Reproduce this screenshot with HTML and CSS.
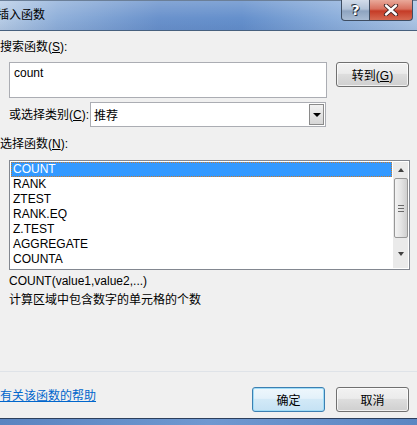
FILE: index.html
```html
<!DOCTYPE html>
<html>
  <head>
    <meta charset="utf-8">
    <title>插入函数</title>
    <link rel="stylesheet" href="styles.css">
  </head>
  <body>
    <div class="dialog">
      <div class="titlebar">
        <span class="title-text">插入函数</span>
        <div class="caption-buttons">
          <button class="caption-help">?</button>
          <button class="caption-close">
            <svg width="16" height="12" viewBox="0 0 16 12">
              <path d="M3 1.5 L13 10.5 M13 1.5 L3 10.5" stroke="#3a2020" stroke-width="4.2" stroke-linecap="round"/>
              <path d="M3 1.5 L13 10.5 M13 1.5 L3 10.5" stroke="#fff" stroke-width="2.4" stroke-linecap="round"/>
            </svg>
          </button>
        </div>
      </div>

      <div class="content">
        <div class="label">搜索函数(<u>S</u>):</div>
        <div class="search-row">
          <div class="search-box">count</div>
          <button class="btn">转到(<u>G</u>)</button>
        </div>

        <div class="category-row">
          <span class="label">或选择类别(<u>C</u>):</span>
          <div class="combo">
            <span class="combo-value">推荐</span>
            <span class="combo-arrow"></span>
          </div>
        </div>

        <div class="label list-label">选择函数(<u>N</u>):</div>
        <div class="listbox">
          <ul class="list-items">
            <li class="selected">COUNT</li>
            <li>RANK</li>
            <li>ZTEST</li>
            <li>RANK.EQ</li>
            <li>Z.TEST</li>
            <li>AGGREGATE</li>
            <li>COUNTA</li>
          </ul>
          <div class="scrollbar">
            <span class="arrow-up"></span>
            <div class="thumb"><span class="grip"></span></div>
            <span class="arrow-down"></span>
          </div>
        </div>

        <div class="description">
          <div>COUNT(value1,value2,...)</div>
          <div>计算区域中包含数字的单元格的个数</div>
        </div>
      </div>

      <div class="footer">
        <a class="help-link" href="#">有关该函数的帮助</a>
        <div class="footer-buttons">
          <button class="btn btn-default">确定</button>
          <button class="btn">取消</button>
        </div>
      </div>
      <div class="frame-bottom"></div>
    </div>
  </body>
</html>
```

FILE: styles.css
```css
body {
  margin: 0;
  background-color: #f0f0f0;
  font-family: "Liberation Sans", "Noto Sans CJK SC", sans-serif;
  font-size: 12px;
  color: #000;
  overflow: hidden;
}

.dialog {
  width: 417px;
  height: 425px;
  display: flex;
  flex-direction: column;
}

/* title bar */
.titlebar {
  height: 29px;
  display: flex;
  justify-content: space-between;
  align-items: flex-start;
  background:
    linear-gradient(to bottom, rgba(255, 255, 255, 0.18), rgba(255, 255, 255, 0) 60%, rgba(20, 50, 110, 0.08)),
    linear-gradient(to right, #b8cde6 0%, #90b0da 14%, #6a92cc 38%, #6590cc 58%, #8eb0dc 82%, #adc6e5 100%);
  border-top: 1px solid #6b7f98;
  border-bottom: 1px solid #47607e;
  flex-shrink: 0;
}

.title-text {
  margin-left: -3px;
  line-height: 29px;
  font-size: 12px;
  color: #000;
}

.caption-buttons {
  display: flex;
  margin-right: 4px;
  margin-top: -1px;
}

.caption-buttons button {
  height: 21px;
  border: 1px solid #3e4d62;
  border-top: none;
  padding: 0;
  display: flex;
  align-items: center;
  justify-content: center;
}

.caption-help {
  width: 29px;
  border-radius: 0 0 0 4px;
  background: linear-gradient(to bottom, #d2dcea 0%, #b3c3d8 45%, #8ea4c0 55%, #a9bcd4 100%);
  color: #fff;
  font-family: "DejaVu Sans", sans-serif;
  font-weight: bold;
  font-size: 14px;
  text-shadow: 0 0 1px #2a3444, 1px 1px 0 #2a3444, -1px -1px 0 #2a3444;
}

.caption-close {
  width: 43px;
  border-left: none !important;
  border-radius: 0 0 4px 0;
  background: linear-gradient(to bottom, #e9a99a 0%, #d8705e 45%, #c53b26 55%, #d66a52 100%);
}

/* main area */
.content {
  padding-top: 8px;
  height: 332px;
  flex-shrink: 0;
}

.label {
  line-height: 16px;
}

.search-row {
  display: flex;
  align-items: flex-start;
  gap: 9px;
  margin-top: 7px;
  padding-left: 9px;
}

.search-box {
  width: 318px;
  height: 36px;
  box-sizing: border-box;
  border: 1px solid #abadb3;
  background-color: #fff;
  padding: 3px 0 0 4px;
  line-height: 14px;
}

.btn {
  width: 73px;
  height: 25px;
  border: 1px solid #707070;
  border-radius: 3px;
  background: linear-gradient(to bottom, #f2f2f2 0%, #ebebeb 45%, #dddddd 50%, #cfcfcf 100%);
  font-family: "Liberation Sans", "Noto Sans CJK SC", sans-serif;
  font-size: 12px;
  color: #000;
  padding: 0;
  box-shadow: inset 0 0 0 1px rgba(255, 255, 255, 0.7);
}

.btn-default {
  border-color: #3c7fb1;
  box-shadow: inset 0 0 0 1px #9fdcf7;
  background: linear-gradient(to bottom, #eef7fc 0%, #e3f1fa 45%, #d2e9f7 50%, #c5e2f4 100%);
}

.category-row {
  display: flex;
  align-items: center;
  margin-top: 4px;
  padding-left: 9px;
  height: 25px;
}

.combo {
  margin-left: 1px;
  width: 236px;
  height: 25px;
  box-sizing: border-box;
  border: 1px solid #abadb3;
  background-color: #fff;
  display: flex;
  align-items: center;
  justify-content: space-between;
  padding: 1px 1px 1px 3px;
}

.combo-arrow {
  width: 15px;
  height: 21px;
  box-sizing: border-box;
  border: 1px solid #8a8a8a;
  background: linear-gradient(to bottom, #f2f2f2, #d6d6d6);
  position: relative;
}

.combo-arrow::after {
  content: "";
  position: absolute;
  left: 3px;
  top: 8px;
  border-left: 4px solid transparent;
  border-right: 4px solid transparent;
  border-top: 4px solid #000;
}

.list-label {
  margin-top: 9px;
}

.listbox {
  margin: 8px 0 0 9px;
  width: 401px;
  height: 110px;
  box-sizing: border-box;
  border: 1px solid #828790;
  background-color: #fff;
  display: flex;
  justify-content: space-between;
  padding: 1px;
}

.list-items {
  list-style: none;
  margin: 0;
  padding: 0;
  width: 381px;
}

.list-items li {
  height: 15px;
  line-height: 15px;
  padding-left: 2px;
  color: #000;
}

.list-items li.selected {
  background-color: #3399ff;
  color: #fff;
  outline: 1px dotted #c87a2e;
  outline-offset: -1px;
}

.scrollbar {
  width: 15px;
  background-color: #eaeaea;
  display: flex;
  flex-direction: column;
  align-items: center;
}

.arrow-up,
.arrow-down {
  width: 0;
  height: 0;
  border-left: 3.5px solid transparent;
  border-right: 3.5px solid transparent;
}

.arrow-up {
  margin-top: 6px;
  border-bottom: 4px solid #404040;
}

.arrow-down {
  margin-top: 14px;
  border-top: 4px solid #404040;
}

.thumb {
  margin-top: 6px;
  width: 14px;
  height: 60px;
  box-sizing: border-box;
  border: 1px solid #979797;
  border-radius: 2px;
  background: linear-gradient(to right, #f3f3f3, #e4e4e4 50%, #cfcfcf);
  display: flex;
  align-items: center;
  justify-content: center;
}

.grip {
  width: 6px;
  height: 7px;
  background: repeating-linear-gradient(to bottom, #6a6a6a 0 1px, transparent 1px 3px);
}

.description {
  margin: 2px 0 0 9px;
  line-height: 19px;
}

/* bottom buttons */
.footer {
  border-top: 1px solid #dfe3e8;
  height: 46px;
  display: flex;
  justify-content: space-between;
  align-items: flex-start;
  flex-shrink: 0;
}

.help-link {
  margin-top: 16px;
  color: #0066cc;
  text-decoration: underline;
  line-height: 16px;
}

.footer-buttons {
  display: flex;
  gap: 11px;
  margin: 15px 8px 0 0;
}

.frame-bottom {
  flex: 1;
  border-top: 1px solid #2c3f5c;
  background: linear-gradient(to right, #5a84c0, #6f98d0 50%, #5b86c2);
}
```
